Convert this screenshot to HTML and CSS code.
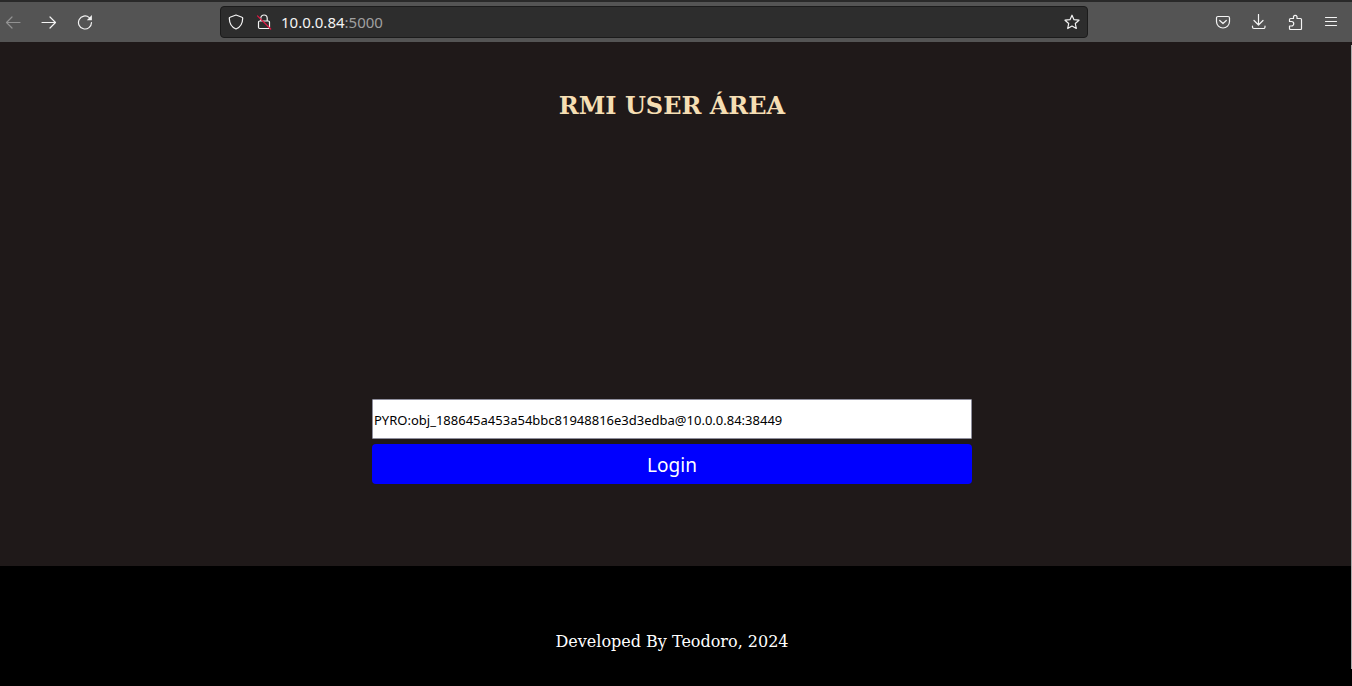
FILE: index.html
```html
<!DOCTYPE html>
<html lang="en">
<head>
<meta charset="utf-8">
<meta name="viewport" content="width=device-width, initial-scale=1">
<title>RMI User Área</title>
<link rel="stylesheet" href="styles.css">
</head>
<body>
<div class="browser">
  <nav class="toolbar" aria-label="Browser toolbar">
    <div class="nav-buttons">
      <button class="tool dim" type="button" aria-label="Back" disabled><svg class="icon" viewBox="0 0 16 16"><path d="M15 8.500H1.500M7 3 1.500 8.500 7 14"/></svg></button>
      <button class="tool" type="button" aria-label="Forward"><svg class="icon" viewBox="0 0 16 16"><path d="M1 8.500h13.500M9 3l5.500 5.500L9 14"/></svg></button>
      <button class="tool" type="button" aria-label="Reload"><svg class="icon" viewBox="0 0 16 16"><path d="M14.500 8.500a6.500 6.500 0 1 1-2.200-4.900"/><path class="solid" d="M14.900 1v4.700a.6.6 0 0 1-.6.6H9.800z"/></svg></button>
    </div>
    <div class="address">
      <button class="mini" type="button" aria-label="Tracking protection"><svg class="icon" viewBox="0 0 16 16"><path d="M8 1 14 3.300a1 1 0 0 1 .7 1C14.600 9 12.500 13.300 8 15 3.500 13.300 1.400 9 1.300 4.300a1 1 0 0 1 .7-1z"/></svg></button>
      <button class="mini" type="button" aria-label="Connection not secure"><svg class="icon" viewBox="0 0 16 16"><path d="M4.800 7V4.200a3.200 3.200 0 0 1 6.400 0V7M3.700 7h8.600a1.200 1.200 0 0 1 1.200 1.200v5.100a1.200 1.200 0 0 1-1.200 1.200H3.700a1.200 1.200 0 0 1-1.200-1.200V8.200A1.200 1.200 0 0 1 3.700 7z"/><path class="strike" d="M1.500 1.800 14.700 15"/></svg></button>
      <div class="url" role="textbox" aria-label="Address" contenteditable="true" spellcheck="false">10.0.0.84<span class="port">:5000</span></div>
      <button class="mini" type="button" aria-label="Bookmark this page"><svg class="icon" viewBox="0 0 16 16"><path d="M8 1.200 10 5.700l5 .5-3.700 3.300 1 5L8 12l-4.300 2.500 1-5L1 6.200l5-.5z"/></svg></button>
    </div>
    <div class="actions">
      <button class="tool" type="button" aria-label="Save to Pocket"><svg class="icon" viewBox="0 0 16 16"><path d="M3 2.500h10a1.500 1.500 0 0 1 1.500 1.500v3.500a6.500 6.500 0 0 1-13 0V4A1.500 1.500 0 0 1 3 2.500z"/><path d="M4.700 6.500 8 9.500l3.300-3"/></svg></button>
      <button class="tool" type="button" aria-label="Downloads"><svg class="icon" viewBox="0 0 16 16"><path d="M7.500.5v10.500M3 6.500 7.500 11 12 6.500M1.500 12v1a1.500 1.500 0 0 0 1.500 1.500h9.500a1.500 1.500 0 0 0 1.500-1.500v-1"/></svg></button>
      <button class="tool" type="button" aria-label="Extensions"><svg class="icon" viewBox="0 0 16 16"><path d="M2.500 7.500V5.500a1 1 0 0 1 1-1H6.500V2.500a2 2 0 0 1 3.500 0v2h3.500a1 1 0 0 1 1 1v9a1 1 0 0 1-1 1h-10a1 1 0 0 1-1-1v-2.500H4.500a2.200 2.200 0 0 0 0-4.500z"/></svg></button>
      <button class="tool" type="button" aria-label="Open menu"><svg class="icon" viewBox="0 0 16 16"><path d="M2.500 3.500h11M2.500 7.500h11M2.500 11.500h11"/></svg></button>
    </div>
  </nav>
  <div class="page">
    <main class="login">
      <h1 class="title">RMI USER ÁREA</h1>
      <form class="form">
        <input class="uri" type="text" aria-label="Object URI" value="PYRO:obj_188645a453a54bbc81948816e3d3edba@10.0.0.84:38449">
        <button class="submit" type="submit">Login</button>
      </form>
    </main>
    <footer class="footer">Developed By Teodoro, 2024</footer>
    <div class="scroll-edge"></div>
  </div>
</div>
</body>
</html>
```
FILE: styles.css
```css
* { box-sizing: border-box; }
body { margin: 0; background: #000; }
.browser { display: flex; flex-direction: column; min-height: 100vh; }
.toolbar {
  display: flex;
  align-items: center;
  height: 42px;
  padding: 0 13px 0 5px;
  border-top: 2px solid #292929;
  background: #545454;
  color: #f4f4f4;
}
.nav-buttons { display: flex; gap: 20px; width: 215px; }
.tool, .mini {
  display: flex;
  padding: 0;
  border: 0;
  background: none;
  color: inherit;
}
.dim { color: #929292; }
.icon {
  width: 16px;
  height: 16px;
  fill: none;
  stroke: currentColor;
  stroke-width: 1.2;
  stroke-linecap: round;
  stroke-linejoin: round;
}
.solid { fill: currentColor; stroke: none; }
.strike { stroke: #e21845; }
.address {
  display: flex;
  flex: 1;
  align-items: center;
  height: 32px;
  padding: 0 7px;
  gap: 12px;
  border: 1px solid #1b1b1b;
  border-radius: 4px;
  background: #2d2d2d;
}
.url {
  flex: 1;
  margin-left: -3px;
  font: 15px/20px "Noto Sans", sans-serif;
  outline: none;
}
.port { color: #a0a0a0; }
.actions {
  display: flex;
  justify-content: flex-end;
  gap: 20px;
  width: 251px;
}
.page {
  position: relative;
  display: flex;
  flex: 1;
  flex-direction: column;
}
.login {
  padding: 49px 8px 82px 0;
  background: #1f1919;
}
.title {
  margin: 0 0 278px;
  color: #f5deb3;
  font: bold 24px/30px "DejaVu Serif", serif;
  text-align: center;
}
.form {
  display: flex;
  flex-direction: column;
  gap: 5px;
  width: 100%;
  max-width: 600px;
  margin: 0 auto;
}
.uri {
  height: 40px;
  padding: 2px 1px 0;
  border: 1px solid #8f8f9d;
  border-radius: 1px;
  background: #fff;
  color: #000;
  font: 13px "Noto Sans", sans-serif;
}
.submit {
  height: 40px;
  padding: 1px 0 0;
  border: 0;
  border-radius: 4px;
  background: #00f;
  color: #fff;
  font: 19px "Noto Sans", sans-serif;
}
.footer {
  padding: 65px 8px 32px 0;
  color: #fff;
  font: 16px/22px "DejaVu Serif", serif;
  text-align: center;
}
.scroll-edge {
  position: absolute;
  top: 3px;
  right: 0;
  bottom: 17px;
  width: 1px;
  background: #aaa;
}
```
